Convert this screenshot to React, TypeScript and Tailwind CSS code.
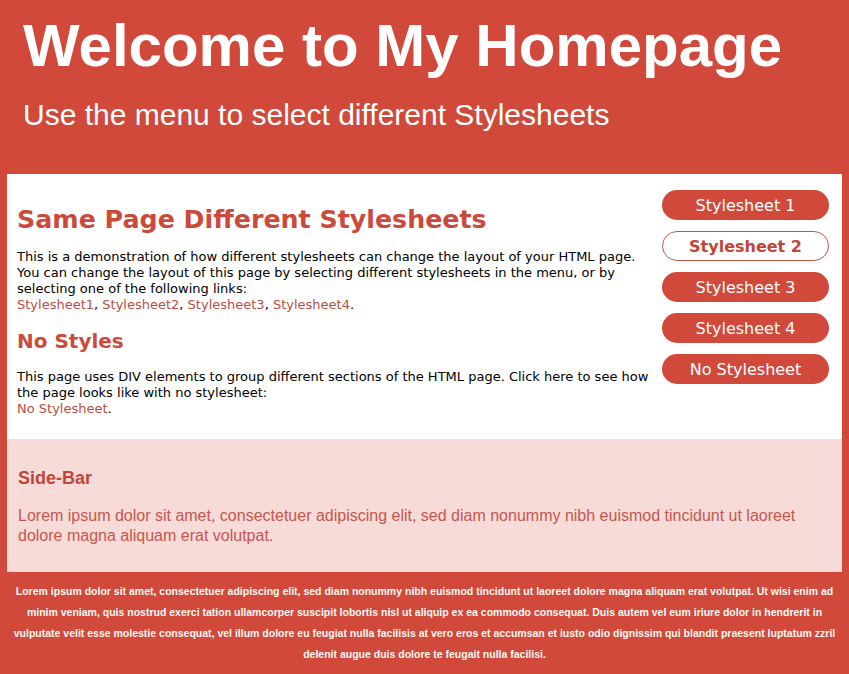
import React from 'react';

const menu = ['Stylesheet 1', 'Stylesheet 2', 'Stylesheet 3', 'Stylesheet 4', 'No Stylesheet'];

const footerText =
  'Lorem ipsum dolor sit amet, consectetuer adipiscing elit, sed diam nonummy nibh euismod tincidunt ut laoreet dolore magna aliquam erat volutpat. Ut wisi enim ad minim veniam, quis nostrud exerci tation ullamcorper suscipit lobortis nisl ut aliquip ex ea commodo consequat. Duis autem vel eum iriure dolor in hendrerit in vulputate velit esse molestie consequat, vel illum dolore eu feugiat nulla facilisis at vero eros et accumsan et iusto odio dignissim qui blandit praesent luptatum zzril delenit augue duis dolore te feugait nulla facilisi.';

const App: React.FC = () => {
  return (
    <div className="min-h-[674px] bg-[#d0493a] px-[7px] font-['Liberation_Sans',Arial,sans-serif]">
      {/* Header */}
      <header className="h-[174px] px-4 pt-[12px] text-white">
        <h1 className="text-[60px] font-bold leading-[68px]">Welcome to My Homepage</h1>
        <p className="mt-[18px] text-[30px] leading-[34px]">Use the menu to select different Stylesheets</p>
      </header>

      {/* Main */}
      <div className="flex bg-white font-['DejaVu_Sans',sans-serif]">
        <main className="flex-1 pl-[10px] pr-[4px] pt-[30px] pb-[22px] text-[13px] leading-[16px] text-black">
          <h2 className="text-[25.3px] font-bold leading-[32px] text-[#cc4a3c]">Same Page Different Stylesheets</h2>
          <p className="mt-[13px]">
            This is a demonstration of how different stylesheets can change the layout of your HTML page. You can change the
            layout of this page by selecting different stylesheets in the menu, or by selecting one of the following links:
            <br />
            <a className="text-[#b84e44]">Stylesheet1</a>, <a className="text-[#b84e44]">Stylesheet2</a>,{' '}
            <a className="text-[#b84e44]">Stylesheet3</a>, <a className="text-[#b84e44]">Stylesheet4</a>.
          </p>
          <h3 className="mt-[15px] text-[20px] font-bold leading-[26px] text-[#cc4a3c]">No Styles</h3>
          <p className="mt-[15px]">
            This page uses DIV elements to group different sections of the HTML page. Click here to see how the page looks like
            with no stylesheet:
            <br />
            <a className="text-[#b84e44]">No Stylesheet</a>.
          </p>
        </main>
        <nav className="mr-[13px] ml-[8px] flex w-[167px] shrink-0 flex-col gap-[11px] pt-[16px]">
          {menu.map((item, i) =>
            i === 1 ? (
              <a
                key={item}
                className="flex h-[30px] items-center justify-center rounded-full border border-[#c0564c] bg-white pt-[2px] text-[16px] font-bold text-[#c0463a]"
              >
                {item}
              </a>
            ) : (
              <a
                key={item}
                className="flex h-[30px] items-center justify-center rounded-full bg-[#d0493a] pt-[2px] text-[16px] text-white"
              >
                {item}
              </a>
            )
          )}
        </nav>
      </div>

      {/* Side-bar */}
      <aside className="h-[133px] bg-[#f6dbd9] px-[11px] pt-[28px]">
        <h3 className="text-[18px] font-bold leading-[22px] text-[#c0463a]">Side-Bar</h3>
        <p className="mt-[17px] text-[16px] leading-[20px] text-[#c5574d]">
          Lorem ipsum dolor sit amet, consectetuer adipiscing elit, sed diam nonummy nibh euismod tincidunt ut laoreet dolore
          magna aliquam erat volutpat.
        </p>
      </aside>

      {/* Footer */}
      <footer className="px-[4px] pt-[9px] pb-[10px] text-center text-[10.5px] font-bold leading-[21px] text-[#fff8f4]">
        {footerText}
      </footer>
    </div>
  );
};

export default App;
